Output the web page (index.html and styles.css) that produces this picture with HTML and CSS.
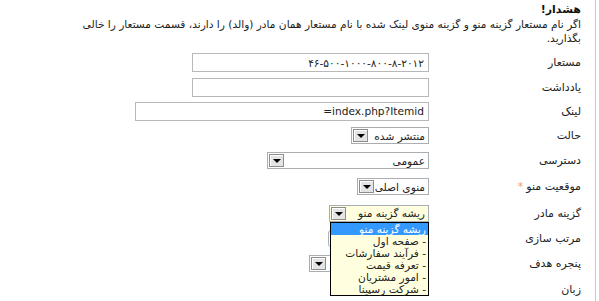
FILE: index.html
```html
<!DOCTYPE html>
<html lang="fa" dir="rtl">
<head>
    <meta charset="UTF-8">
    <title>گزینه منو</title>
    <link rel="stylesheet" href="styles.css">
</head>
<body>
    <div class="page">
        <div class="warning">
            <div class="warning-title">هشدار!</div>
            <div class="warning-line">اگر نام مستعار گزینه منو و گزینه منوی لینک شده با نام مستعار همان مادر (والد) را دارند، قسمت مستعار را خالی</div>
            <div class="warning-line">بگذارید.</div>
        </div>

        <div class="form">
            <div class="label">مستعار</div>
            <div class="field"><input class="text text-alias" dir="ltr" value="۴۶-۵۰۰-۱۰۰۰-۸۰۰-۸-۲۰۱۲"></div>

            <div class="label">یادداشت</div>
            <div class="field"><input class="text text-alias" value=""></div>

            <div class="label">لینک</div>
            <div class="field"><input class="text text-link" value="index.php?Itemid="></div>

            <div class="label">حالت</div>
            <div class="field">
                <div class="select select-state"><span class="select-value">منتشر شده</span><span class="select-arrow"></span></div>
            </div>

            <div class="label">دسترسی</div>
            <div class="field">
                <div class="select select-access"><span class="select-value">عمومی</span><span class="select-arrow"></span></div>
            </div>

            <div class="label">موقعیت منو <span class="star">*</span></div>
            <div class="field">
                <div class="select select-menu"><span class="select-value">منوی اصلی</span><span class="select-arrow"></span></div>
            </div>

            <div class="label">گزینه مادر</div>
            <div class="field">
                <div class="select-wrap">
                    <div class="select select-parent active"><span class="select-value">ریشه گزینه منو</span><span class="select-arrow"></span></div>
                    <ul class="dropdown">
                        <li class="selected">ریشه گزینه منو</li>
                        <li>- صفحه اول</li>
                        <li>- فرآیند سفارشات</li>
                        <li>- تعرفه قیمت</li>
                        <li>- امور مشتریان</li>
                        <li>- شرکت رسپینا</li>
                    </ul>
                </div>
            </div>

            <div class="label">مرتب سازی</div>
            <div class="field">
                <div class="select select-order"><span class="select-value"></span><span class="select-arrow"></span></div>
            </div>

            <div class="label">پنجره هدف</div>
            <div class="field">
                <div class="select select-target"><span class="select-value"></span><span class="select-arrow"></span></div>
            </div>

            <div class="label">زبان</div>
            <div class="field"></div>
        </div>
    </div>
</body>
</html>
```

FILE: styles.css
```css
* {
    box-sizing: border-box;
}
body {
    margin: 0;
    direction: rtl;
    font-family: Tahoma, 'DejaVu Sans', sans-serif;
    font-size: 10.6px;
    color: #222;
    background-color: #fff;
}
.page {
    height: 301px;
    margin-right: 3px;
    padding: 3px 14px 0 8px;
    border-right: 1px solid #c9c9c9;
}
.warning-title {
    font-weight: bold;
    font-size: 11px;
    line-height: 14px;
    color: #111;
}
.warning-line {
    line-height: 14px;
    white-space: nowrap;
}
.form {
    display: grid;
    grid-template-columns: 148px 1fr;
    grid-template-rows: 25px 24px 24px 25px 25px 27px 26px 25px 25px 26px;
    column-gap: 4px;
    margin-top: 5px;
}
.label,
.field {
    display: flex;
    align-items: center;
}
.label {
    font-size: 11px;
}
.star {
    color: #f39a72;
    margin-right: 3px;
}
.text {
    height: 19px;
    padding: 0 4px;
    border: 1px solid #b8b8b8;
    background-color: #fff;
    font: inherit;
    color: #222;
    text-align: right;
}
.text-alias {
    width: 237px;
}
.text-link {
    width: 294px;
}
.select {
    display: flex;
    align-items: center;
    height: 17px;
    padding: 1px;
    border: 1px solid #a9aeb3;
    background-color: #fff;
}
.select-value {
    flex: 1;
    padding-right: 2px;
    white-space: nowrap;
}
.select-arrow {
    position: relative;
    flex: none;
    width: 15px;
    height: 13px;
    border: 1px solid #8d8d8d;
    background-color: #e4e4e4;
    box-shadow: inset 1px 1px 0 #fff;
}
.select-arrow::after {
    content: '';
    position: absolute;
    left: 3px;
    top: 4px;
    border-left: 4px solid transparent;
    border-right: 4px solid transparent;
    border-top: 4px solid #000;
}
.select-state {
    width: 78px;
}
.select-access {
    width: 162px;
}
.select-menu {
    width: 72px;
}
.select-parent {
    width: 100px;
}
.select-order {
    width: 101px;
    border-radius: 3px;
}
.select-target {
    width: 120px;
}
.select.active {
    background-color: #ffffe0;
}
.select-wrap {
    position: relative;
}
.dropdown {
    position: absolute;
    top: 100%;
    left: 1px;
    width: 99px;
    margin: 0;
    padding: 0;
    list-style: none;
    border: 1px solid #000;
    background-color: #ffffe0;
    z-index: 2;
}
.dropdown li {
    height: 12px;
    line-height: 12px;
    padding-right: 2px;
    white-space: nowrap;
    color: #222;
}
.dropdown li.selected {
    background-color: #3399ff;
    color: #fff;
}
```
